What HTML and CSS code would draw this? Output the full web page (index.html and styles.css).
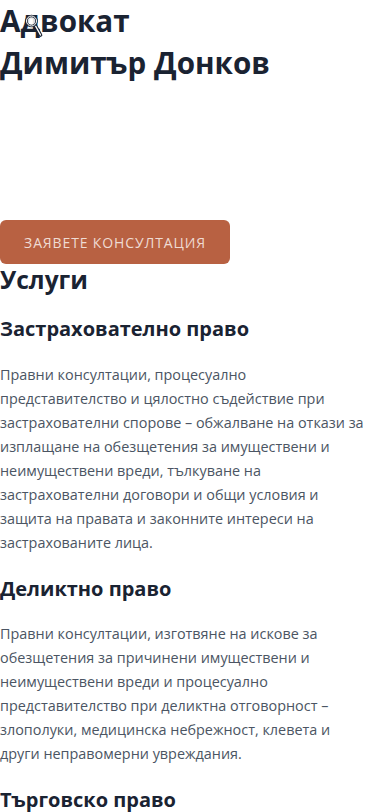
FILE: index.html
```html
<!DOCTYPE html>
<html lang="bg">
<head>
<meta charset="utf-8">
<title>Адвокат Димитър Донков</title>
<link rel="stylesheet" href="styles.css">
</head>
<body>
<header class="hero">
  <h1 class="hero-title">Адвокат<br>Димитър Донков</h1>
  <svg class="cursor" width="24" height="28" viewBox="0 0 24 28" aria-hidden="true">
    <path d="M14 15 L19.5 25" stroke="#1a2332" stroke-width="3.6" stroke-linecap="round"/>
    <path d="M14 15 L19.5 25" stroke="#fff" stroke-width="1.4" stroke-linecap="round"/>
    <circle cx="10.5" cy="11" r="5" fill="#fff" fill-opacity="0.85" stroke="#1a2332" stroke-width="2.6"/>
    <circle cx="10.5" cy="11" r="5" fill="none" stroke="#fff" stroke-width="1"/>
  </svg>
  <a class="cta" href="#">Заявете консултация</a>
</header>
<section class="services">
  <h2 class="services-title">Услуги</h2>
  <article class="service">
    <h3 class="service-title">Застрахователно право</h3>
    <p class="service-text">Правни консултации, процесуално представителство и цялостно съдействие при застрахователни спорове – обжалване на откази за изплащане на обезщетения за имуществени и неимуществени вреди, тълкуване на застрахователни договори и общи условия и защита на правата и законните интереси на застрахованите лица.</p>
  </article>
  <article class="service">
    <h3 class="service-title">Деликтно право</h3>
    <p class="service-text">Правни консултации, изготвяне на искове за обезщетения за причинени имуществени и неимуществени вреди и процесуално представителство при деликтна отговорност – злополуки, медицинска небрежност, клевета и други неправомерни увреждания.</p>
  </article>
  <article class="service">
    <h3 class="service-title">Търговско право</h3>
    <p class="service-text">Правни консултации и процесуално представителство по търговски спорове.</p>
  </article>
</section>
</body>
</html>
```
FILE: styles.css
```css
* { box-sizing: border-box; }
html, body {
  margin: 0;
  padding: 0;
  background: #ffffff;
}
body {
  font-family: "Open Sans", "Noto Sans", sans-serif;
  color: #1a2332;
}
.hero {
  position: relative;
  display: flex;
  flex-direction: column;
  align-items: flex-start;
}
.hero-title {
  margin: 0;
  font-size: 29.6px;
  line-height: 42px;
  font-weight: 700;
  color: #1a2332;
}
.cursor {
  position: absolute;
  left: 21px;
  top: 10px;
}
.cta {
  margin-top: 136px;
  display: inline-flex;
  align-items: center;
  justify-content: center;
  width: 230px;
  height: 44px;
  background: #b86142;
  border-radius: 6px;
  color: #efdbd3;
  text-decoration: none;
  text-transform: uppercase;
  font-size: 14px;
  letter-spacing: 0.87px;
}
.services {
  padding-right: 8px;
}
.services-title {
  margin: 0 0 2px;
  font-size: 24.5px;
  line-height: 31px;
  font-weight: 700;
}
.service-title {
  margin: 20px 0 19.5px;
  font-size: 20px;
  line-height: 28px;
  font-weight: 700;
}
.service-text {
  margin: 0;
  font-size: 14.4px;
  line-height: 24px;
  color: #4b5563;
}
```
